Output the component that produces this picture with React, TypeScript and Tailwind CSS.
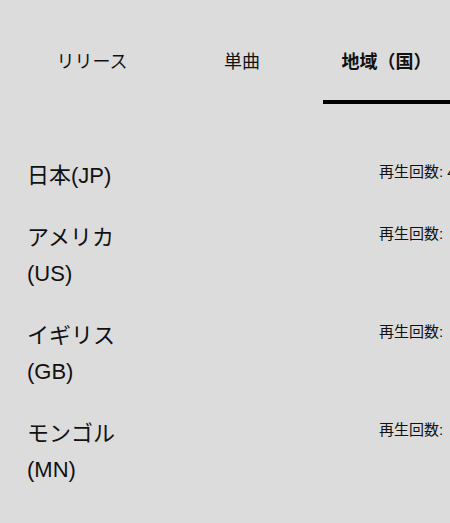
const FONT = { fontFamily: '"Liberation Sans", "Noto Sans CJK JP", sans-serif' };

const tabs = [
  { label: "リリース", w: "w-[150px]", active: false },
  { label: "単曲", w: "w-[150px]", active: false },
  { label: "地域（国）", w: "w-[127px] ml-[6px]", active: true },
];

const regions = [
  { name: "日本", code: "(JP)", plays: "再生回数: 4,218,530" },
  { name: "アメリカ", code: "(US)", plays: "再生回数:" },
  { name: "イギリス", code: "(GB)", plays: "再生回数:" },
  { name: "モンゴル", code: "(MN)", plays: "再生回数:" },
];

export default function App() {
  return (
    <div
      className="w-[450px] h-[523px] overflow-hidden bg-[#dcdcdc] text-[#111]"
      style={FONT}
    >
      <div className="flex pl-[17px] whitespace-nowrap">
        {tabs.map((t) => (
          <div
            key={t.label}
            className={`${t.w} shrink-0 h-[104px] pt-[24px] flex items-center justify-center text-[18px] ${
              t.active ? "font-bold border-b-[4px] border-black" : "border-b-[4px] border-transparent"
            }`}
          >
            {t.label}
          </div>
        ))}
      </div>

      <div className="flex flex-col gap-[26px] pt-[54px] pl-[27px]">
        {regions.map((r) => (
          <div key={r.code} className="flex items-start">
            <div className="w-[352px] shrink-0">
              <div className="w-[120px] text-[22px] leading-[36px]">
                {r.name}
                <wbr />
                {r.code}
              </div>
            </div>
            <div className="whitespace-nowrap text-[15px] leading-[24px] pt-[2px]">{r.plays}</div>
          </div>
        ))}
      </div>
    </div>
  );
}
